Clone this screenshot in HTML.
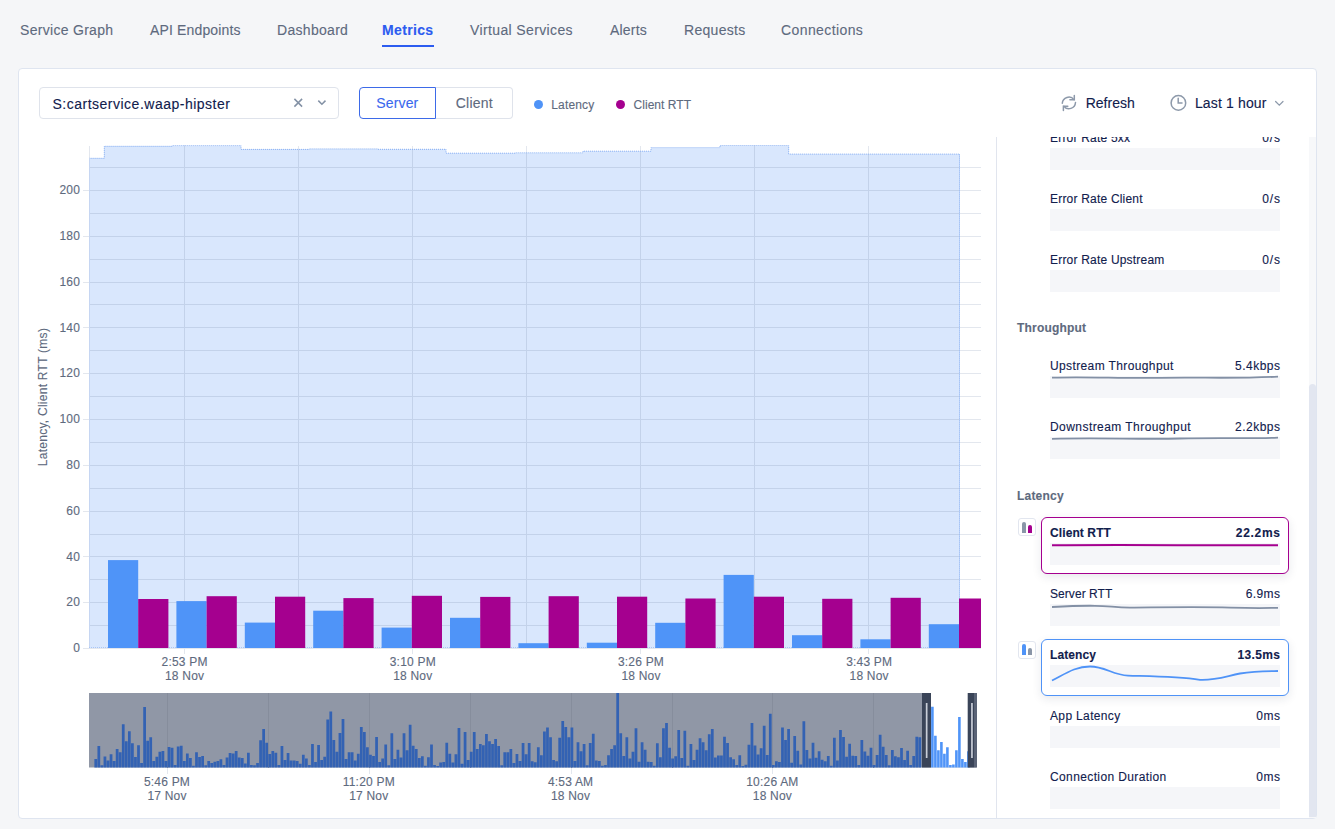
<!DOCTYPE html><html><head><meta charset="utf-8"><style>
html,body{margin:0;padding:0;width:1335px;height:829px;overflow:hidden;background:#f5f6f8;font-family:"Liberation Sans",sans-serif}
.t{position:absolute;white-space:nowrap;-webkit-text-stroke:0.12px currentColor}
</style></head><body>
<div class="t" style="left:20px;top:23.05px;font-size:14px;line-height:14px;color:#5e6a7e;font-weight:400;letter-spacing:0.3px;">Service Graph</div>
<div class="t" style="left:150px;top:23.05px;font-size:14px;line-height:14px;color:#5e6a7e;font-weight:400;letter-spacing:0.15px;">API Endpoints</div>
<div class="t" style="left:277px;top:23.05px;font-size:14px;line-height:14px;color:#5e6a7e;font-weight:400;letter-spacing:0.3px;">Dashboard</div>
<div class="t" style="left:470px;top:23.05px;font-size:14px;line-height:14px;color:#5e6a7e;font-weight:400;letter-spacing:0.37px;">Virtual Services</div>
<div class="t" style="left:610px;top:23.05px;font-size:14px;line-height:14px;color:#5e6a7e;font-weight:400;letter-spacing:0.2px;">Alerts</div>
<div class="t" style="left:684px;top:23.05px;font-size:14px;line-height:14px;color:#5e6a7e;font-weight:400;letter-spacing:0.3px;">Requests</div>
<div class="t" style="left:781px;top:23.05px;font-size:14px;line-height:14px;color:#5e6a7e;font-weight:400;letter-spacing:0.4px;">Connections</div>
<div class="t" style="left:382px;top:23.05px;font-size:14px;line-height:14px;color:#2c5cf0;font-weight:700;letter-spacing:0.35px;">Metrics</div>
<div style="position:absolute;left:382px;top:45px;width:52px;height:2px;background:#2c5cf0"></div>
<div style="position:absolute;left:18px;top:68px;width:1297px;height:749px;background:#fff;border:1px solid #dfe5f0;border-radius:4px"></div>
<div style="position:absolute;left:39px;top:87px;width:298px;height:30px;border:1px solid #dfe3eb;border-radius:4px;background:#fff"></div>
<div class="t" style="left:52.5px;top:97.45px;font-size:14px;line-height:14px;color:#11204d;font-weight:400;letter-spacing:0.5px;">S:cartservice.waap-hipster</div>
<svg style="position:absolute;left:0;top:0" width="1335" height="140"><path d="M294.4 98.9l7.7 7.7M302.1 98.9l-7.7 7.7" stroke="#8391a5" stroke-width="1.5" fill="none"/><path d="M318.3 100.6l3.6 3.6 3.6-3.6" stroke="#8391a5" stroke-width="1.5" fill="none"/></svg>
<div style="position:absolute;left:436px;top:87px;width:76px;height:30px;border:1px solid #dfe3eb;border-left:none;border-radius:0 4px 4px 0;background:#fff"></div>
<div style="position:absolute;left:359px;top:87px;width:75px;height:30px;border:1px solid #3d6ae8;border-radius:4px 0 0 4px;background:#fff"></div>
<div class="t" style="left:376.3px;top:95.95px;font-size:14px;line-height:14px;color:#3a68ee;font-weight:400;letter-spacing:0.15px;">Server</div>
<div class="t" style="left:455.8px;top:95.95px;font-size:14px;line-height:14px;color:#5e6a7e;font-weight:400;letter-spacing:0.2px;">Client</div>
<div style="position:absolute;left:533.7px;top:99.9px;width:9px;height:9px;border-radius:50%;background:#4f93f7"></div>
<div style="position:absolute;left:615.7px;top:99.9px;width:9px;height:9px;border-radius:50%;background:#a5008f"></div>
<div class="t" style="left:551.3px;top:98.74px;font-size:12px;line-height:12px;color:#5e6a7e;font-weight:400;letter-spacing:0.15px;">Latency</div>
<div class="t" style="left:633.5px;top:98.74px;font-size:12px;line-height:12px;color:#5e6a7e;font-weight:400;letter-spacing:0.05px;">Client RTT</div>
<div class="t" style="left:1085.7px;top:95.95px;font-size:14px;line-height:14px;color:#11204d;font-weight:400;">Refresh</div>
<div class="t" style="left:1194.9px;top:96.05px;font-size:14px;line-height:14px;color:#11204d;font-weight:400;letter-spacing:0.15px;">Last 1 hour</div>
<svg style="position:absolute;left:0;top:0" width="1335" height="140">
<g stroke="#8d99aa" stroke-width="1.5" fill="none" stroke-linecap="round">
<path d="M1074.3 95.4v4.3h-4.4"/><path d="M1062.3 103.3A6.6 6.6 0 0 1 1074 99.6"/>
<path d="M1063.4 110.5v-4.3h4.4"/><path d="M1075.5 102.5A6.6 6.6 0 0 1 1063.8 106.3"/>
<circle cx="1178.4" cy="102.9" r="7.3"/><path d="M1178.2 98.3v4.8h3.8"/>
<path d="M1275.6 101.5l3.7 3.7 3.7-3.7" stroke-width="1.2"/>
</g></svg>
<div style="position:absolute;left:996px;top:137px;width:1px;height:681px;background:#e1e5ee"></div>
<svg style="position:absolute;left:0;top:0" width="1335" height="829" shape-rendering="crispEdges">
<line x1="83" y1="648.5" x2="981" y2="648.5" stroke="#e3e7ee" stroke-width="1"/>
<line x1="89.4" y1="625.5" x2="981" y2="625.5" stroke="#e3e7ee" stroke-width="1"/>
<line x1="83" y1="602.5" x2="981" y2="602.5" stroke="#e3e7ee" stroke-width="1"/>
<line x1="89.4" y1="579.5" x2="981" y2="579.5" stroke="#e3e7ee" stroke-width="1"/>
<line x1="83" y1="556.5" x2="981" y2="556.5" stroke="#e3e7ee" stroke-width="1"/>
<line x1="89.4" y1="534.5" x2="981" y2="534.5" stroke="#e3e7ee" stroke-width="1"/>
<line x1="83" y1="511.5" x2="981" y2="511.5" stroke="#e3e7ee" stroke-width="1"/>
<line x1="89.4" y1="488.5" x2="981" y2="488.5" stroke="#e3e7ee" stroke-width="1"/>
<line x1="83" y1="465.5" x2="981" y2="465.5" stroke="#e3e7ee" stroke-width="1"/>
<line x1="89.4" y1="442.5" x2="981" y2="442.5" stroke="#e3e7ee" stroke-width="1"/>
<line x1="83" y1="419.5" x2="981" y2="419.5" stroke="#e3e7ee" stroke-width="1"/>
<line x1="89.4" y1="396.5" x2="981" y2="396.5" stroke="#e3e7ee" stroke-width="1"/>
<line x1="83" y1="373.5" x2="981" y2="373.5" stroke="#e3e7ee" stroke-width="1"/>
<line x1="89.4" y1="350.5" x2="981" y2="350.5" stroke="#e3e7ee" stroke-width="1"/>
<line x1="83" y1="327.5" x2="981" y2="327.5" stroke="#e3e7ee" stroke-width="1"/>
<line x1="89.4" y1="304.5" x2="981" y2="304.5" stroke="#e3e7ee" stroke-width="1"/>
<line x1="83" y1="282.5" x2="981" y2="282.5" stroke="#e3e7ee" stroke-width="1"/>
<line x1="89.4" y1="259.5" x2="981" y2="259.5" stroke="#e3e7ee" stroke-width="1"/>
<line x1="83" y1="236.5" x2="981" y2="236.5" stroke="#e3e7ee" stroke-width="1"/>
<line x1="89.4" y1="213.5" x2="981" y2="213.5" stroke="#e3e7ee" stroke-width="1"/>
<line x1="83" y1="190.5" x2="981" y2="190.5" stroke="#e3e7ee" stroke-width="1"/>
<line x1="89.4" y1="167.5" x2="981" y2="167.5" stroke="#e3e7ee" stroke-width="1"/>
<line x1="89.5" y1="145.5" x2="89.5" y2="648" stroke="#e3e7ee" stroke-width="1"/>
<line x1="184.5" y1="145.5" x2="184.5" y2="654" stroke="#e3e7ee" stroke-width="1"/>
<line x1="298.5" y1="145.5" x2="298.5" y2="648" stroke="#e3e7ee" stroke-width="1"/>
<line x1="412.5" y1="145.5" x2="412.5" y2="654" stroke="#e3e7ee" stroke-width="1"/>
<line x1="526.5" y1="145.5" x2="526.5" y2="648" stroke="#e3e7ee" stroke-width="1"/>
<line x1="640.5" y1="145.5" x2="640.5" y2="654" stroke="#e3e7ee" stroke-width="1"/>
<line x1="754.5" y1="145.5" x2="754.5" y2="648" stroke="#e3e7ee" stroke-width="1"/>
<line x1="868.5" y1="145.5" x2="868.5" y2="654" stroke="#e3e7ee" stroke-width="1"/>
<path d="M89.4 648.0 L89.4 158.3 L104.3 158.3 L104.3 146.3 L172 146.3 L172 145.6 L241 145.6 L241 149.4 L309 149.4 L309 148.9 L378 148.9 L378 149.3 L446 149.3 L446 153.2 L515 153.2 L515 152.8 L583 152.8 L583 151.2 L651 151.2 L651 147.6 L720 147.6 L720 145.5 L788.7 145.5 L788.7 154.1 L959.5 154.1 L959.5 648.0 Z" fill="#d9e7fd" stroke="none"/>
<clipPath id="ca"><path d="M89.4 648.0 L89.4 158.3 L104.3 158.3 L104.3 146.3 L172 146.3 L172 145.6 L241 145.6 L241 149.4 L309 149.4 L309 148.9 L378 148.9 L378 149.3 L446 149.3 L446 153.2 L515 153.2 L515 152.8 L583 152.8 L583 151.2 L651 151.2 L651 147.6 L720 147.6 L720 145.5 L788.7 145.5 L788.7 154.1 L959.5 154.1 L959.5 648.0 Z"/></clipPath>
<g clip-path="url(#ca)">
<line x1="89.4" y1="625.5" x2="981" y2="625.5" stroke="#c3d2ea" stroke-width="1"/>
<line x1="89.4" y1="602.5" x2="981" y2="602.5" stroke="#c3d2ea" stroke-width="1"/>
<line x1="89.4" y1="579.5" x2="981" y2="579.5" stroke="#c3d2ea" stroke-width="1"/>
<line x1="89.4" y1="556.5" x2="981" y2="556.5" stroke="#c3d2ea" stroke-width="1"/>
<line x1="89.4" y1="534.5" x2="981" y2="534.5" stroke="#c3d2ea" stroke-width="1"/>
<line x1="89.4" y1="511.5" x2="981" y2="511.5" stroke="#c3d2ea" stroke-width="1"/>
<line x1="89.4" y1="488.5" x2="981" y2="488.5" stroke="#c3d2ea" stroke-width="1"/>
<line x1="89.4" y1="465.5" x2="981" y2="465.5" stroke="#c3d2ea" stroke-width="1"/>
<line x1="89.4" y1="442.5" x2="981" y2="442.5" stroke="#c3d2ea" stroke-width="1"/>
<line x1="89.4" y1="419.5" x2="981" y2="419.5" stroke="#c3d2ea" stroke-width="1"/>
<line x1="89.4" y1="396.5" x2="981" y2="396.5" stroke="#c3d2ea" stroke-width="1"/>
<line x1="89.4" y1="373.5" x2="981" y2="373.5" stroke="#c3d2ea" stroke-width="1"/>
<line x1="89.4" y1="350.5" x2="981" y2="350.5" stroke="#c3d2ea" stroke-width="1"/>
<line x1="89.4" y1="327.5" x2="981" y2="327.5" stroke="#c3d2ea" stroke-width="1"/>
<line x1="89.4" y1="304.5" x2="981" y2="304.5" stroke="#c3d2ea" stroke-width="1"/>
<line x1="89.4" y1="282.5" x2="981" y2="282.5" stroke="#c3d2ea" stroke-width="1"/>
<line x1="89.4" y1="259.5" x2="981" y2="259.5" stroke="#c3d2ea" stroke-width="1"/>
<line x1="89.4" y1="236.5" x2="981" y2="236.5" stroke="#c3d2ea" stroke-width="1"/>
<line x1="89.4" y1="213.5" x2="981" y2="213.5" stroke="#c3d2ea" stroke-width="1"/>
<line x1="89.4" y1="190.5" x2="981" y2="190.5" stroke="#c3d2ea" stroke-width="1"/>
<line x1="89.4" y1="167.5" x2="981" y2="167.5" stroke="#c3d2ea" stroke-width="1"/>
<line x1="184.5" y1="140" x2="184.5" y2="648" stroke="#c3d2ea" stroke-width="1"/>
<line x1="298.5" y1="140" x2="298.5" y2="648" stroke="#c3d2ea" stroke-width="1"/>
<line x1="412.5" y1="140" x2="412.5" y2="648" stroke="#c3d2ea" stroke-width="1"/>
<line x1="526.5" y1="140" x2="526.5" y2="648" stroke="#c3d2ea" stroke-width="1"/>
<line x1="640.5" y1="140" x2="640.5" y2="648" stroke="#c3d2ea" stroke-width="1"/>
<line x1="754.5" y1="140" x2="754.5" y2="648" stroke="#c3d2ea" stroke-width="1"/>
<line x1="868.5" y1="140" x2="868.5" y2="648" stroke="#c3d2ea" stroke-width="1"/>
</g>
<path d="M89.4 158.3 L104.3 158.3 L104.3 146.3 L172 146.3 L172 145.6 L241 145.6 L241 149.4 L309 149.4 L309 148.9 L378 148.9 L378 149.3 L446 149.3 L446 153.2 L515 153.2 L515 152.8 L583 152.8 L583 151.2 L651 151.2 L651 147.6 L720 147.6 L720 145.5 L788.7 145.5 L788.7 154.1 L959.5 154.1 L959.5 648.0" fill="none" stroke="#86aef2" stroke-width="1" stroke-dasharray="1 1" shape-rendering="auto"/>
<line x1="83" y1="648.5" x2="981" y2="648.5" stroke="#e3e7ee" stroke-width="1"/>
<line x1="89.5" y1="158" x2="89.5" y2="648" stroke="#c6d6f2" stroke-width="1"/>
<line x1="89" y1="647.5" x2="959.5" y2="647.5" stroke="#a8c5f6" stroke-width="1" stroke-dasharray="1 1"/>
<rect x="108.0" y="560.1" width="30.2" height="87.9" fill="#4f94f8" shape-rendering="auto"/>
<rect x="138.2" y="599.0" width="30.2" height="49.0" fill="#a5008f" shape-rendering="auto"/>
<rect x="176.4" y="601.1" width="30.2" height="46.9" fill="#4f94f8" shape-rendering="auto"/>
<rect x="206.6" y="596.2" width="30.2" height="51.8" fill="#a5008f" shape-rendering="auto"/>
<rect x="244.8" y="622.6" width="30.2" height="25.4" fill="#4f94f8" shape-rendering="auto"/>
<rect x="275.0" y="596.7" width="30.2" height="51.3" fill="#a5008f" shape-rendering="auto"/>
<rect x="313.2" y="610.7" width="30.2" height="37.3" fill="#4f94f8" shape-rendering="auto"/>
<rect x="343.4" y="598.1" width="30.2" height="49.9" fill="#a5008f" shape-rendering="auto"/>
<rect x="381.6" y="627.6" width="30.2" height="20.4" fill="#4f94f8" shape-rendering="auto"/>
<rect x="411.8" y="595.8" width="30.2" height="52.2" fill="#a5008f" shape-rendering="auto"/>
<rect x="450.0" y="617.8" width="30.2" height="30.2" fill="#4f94f8" shape-rendering="auto"/>
<rect x="480.2" y="596.9" width="30.2" height="51.1" fill="#a5008f" shape-rendering="auto"/>
<rect x="518.4" y="643.2" width="30.2" height="4.8" fill="#4f94f8" shape-rendering="auto"/>
<rect x="548.6" y="596.2" width="30.2" height="51.8" fill="#a5008f" shape-rendering="auto"/>
<rect x="586.8" y="642.7" width="30.2" height="5.3" fill="#4f94f8" shape-rendering="auto"/>
<rect x="617.0" y="596.7" width="30.2" height="51.3" fill="#a5008f" shape-rendering="auto"/>
<rect x="655.2" y="622.8" width="30.2" height="25.2" fill="#4f94f8" shape-rendering="auto"/>
<rect x="685.4" y="598.5" width="30.2" height="49.5" fill="#a5008f" shape-rendering="auto"/>
<rect x="723.6" y="574.9" width="30.2" height="73.1" fill="#4f94f8" shape-rendering="auto"/>
<rect x="753.8" y="596.7" width="30.2" height="51.3" fill="#a5008f" shape-rendering="auto"/>
<rect x="792.0" y="635.2" width="30.2" height="12.8" fill="#4f94f8" shape-rendering="auto"/>
<rect x="822.2" y="598.8" width="30.2" height="49.2" fill="#a5008f" shape-rendering="auto"/>
<rect x="860.4" y="639.3" width="30.2" height="8.7" fill="#4f94f8" shape-rendering="auto"/>
<rect x="890.6" y="597.8" width="30.2" height="50.2" fill="#a5008f" shape-rendering="auto"/>
<rect x="928.8" y="624.2" width="30.2" height="23.8" fill="#4f94f8" shape-rendering="auto"/>
<rect x="959.0" y="598.5" width="22.0" height="49.5" fill="#a5008f" shape-rendering="auto"/>
</svg>
<div class="t" style="right:1254.9px;top:642.14px;font-size:12px;line-height:12px;color:#5e6a7e;font-weight:400;letter-spacing:0.2px;">0</div>
<div class="t" style="right:1254.9px;top:596.34px;font-size:12px;line-height:12px;color:#5e6a7e;font-weight:400;letter-spacing:0.2px;">20</div>
<div class="t" style="right:1254.9px;top:550.54px;font-size:12px;line-height:12px;color:#5e6a7e;font-weight:400;letter-spacing:0.2px;">40</div>
<div class="t" style="right:1254.9px;top:504.74px;font-size:12px;line-height:12px;color:#5e6a7e;font-weight:400;letter-spacing:0.2px;">60</div>
<div class="t" style="right:1254.9px;top:458.94px;font-size:12px;line-height:12px;color:#5e6a7e;font-weight:400;letter-spacing:0.2px;">80</div>
<div class="t" style="right:1254.9px;top:413.14px;font-size:12px;line-height:12px;color:#5e6a7e;font-weight:400;letter-spacing:0.2px;">100</div>
<div class="t" style="right:1254.9px;top:367.34px;font-size:12px;line-height:12px;color:#5e6a7e;font-weight:400;letter-spacing:0.2px;">120</div>
<div class="t" style="right:1254.9px;top:321.54px;font-size:12px;line-height:12px;color:#5e6a7e;font-weight:400;letter-spacing:0.2px;">140</div>
<div class="t" style="right:1254.9px;top:275.74px;font-size:12px;line-height:12px;color:#5e6a7e;font-weight:400;letter-spacing:0.2px;">160</div>
<div class="t" style="right:1254.9px;top:229.94px;font-size:12px;line-height:12px;color:#5e6a7e;font-weight:400;letter-spacing:0.2px;">180</div>
<div class="t" style="right:1254.9px;top:184.14px;font-size:12px;line-height:12px;color:#5e6a7e;font-weight:400;letter-spacing:0.2px;">200</div>
<div class="t" style="left:-32.5px;top:390.7px;width:150px;text-align:center;font-size:12px;line-height:12px;color:#5e6a7e;transform:rotate(-90deg);letter-spacing:0.26px">Latency, Client RTT (ms)</div>
<div class="t" style="left:-15.400000000000006px;width:400px;text-align:center;top:655.84px;font-size:12px;line-height:12px;color:#5e6a7e;font-weight:400;letter-spacing:0.2px;">2:53 PM</div>
<div class="t" style="left:-15.400000000000006px;width:400px;text-align:center;top:669.84px;font-size:12px;line-height:12px;color:#5e6a7e;font-weight:400;letter-spacing:0.2px;">18 Nov</div>
<div class="t" style="left:212.79999999999995px;width:400px;text-align:center;top:655.84px;font-size:12px;line-height:12px;color:#5e6a7e;font-weight:400;letter-spacing:0.2px;">3:10 PM</div>
<div class="t" style="left:212.79999999999995px;width:400px;text-align:center;top:669.84px;font-size:12px;line-height:12px;color:#5e6a7e;font-weight:400;letter-spacing:0.2px;">18 Nov</div>
<div class="t" style="left:441.0px;width:400px;text-align:center;top:655.84px;font-size:12px;line-height:12px;color:#5e6a7e;font-weight:400;letter-spacing:0.2px;">3:26 PM</div>
<div class="t" style="left:441.0px;width:400px;text-align:center;top:669.84px;font-size:12px;line-height:12px;color:#5e6a7e;font-weight:400;letter-spacing:0.2px;">18 Nov</div>
<div class="t" style="left:669.1999999999999px;width:400px;text-align:center;top:655.84px;font-size:12px;line-height:12px;color:#5e6a7e;font-weight:400;letter-spacing:0.2px;">3:43 PM</div>
<div class="t" style="left:669.1999999999999px;width:400px;text-align:center;top:669.84px;font-size:12px;line-height:12px;color:#5e6a7e;font-weight:400;letter-spacing:0.2px;">18 Nov</div>
<svg style="position:absolute;left:0;top:0" width="1335" height="829">
<rect x="89" y="693.0" width="887.5" height="74.5" fill="#9097a6"/>
<rect x="931" y="693.0" width="37" height="74.5" fill="#ffffff"/>
<line x1="167.5" y1="693.0" x2="167.5" y2="773.5" stroke="#868d9c" stroke-width="1" shape-rendering="crispEdges"/>
<line x1="268.5" y1="693.0" x2="268.5" y2="767.5" stroke="#868d9c" stroke-width="1" shape-rendering="crispEdges"/>
<line x1="369.5" y1="693.0" x2="369.5" y2="773.5" stroke="#868d9c" stroke-width="1" shape-rendering="crispEdges"/>
<line x1="470.5" y1="693.0" x2="470.5" y2="767.5" stroke="#868d9c" stroke-width="1" shape-rendering="crispEdges"/>
<line x1="571.5" y1="693.0" x2="571.5" y2="773.5" stroke="#868d9c" stroke-width="1" shape-rendering="crispEdges"/>
<line x1="672.5" y1="693.0" x2="672.5" y2="767.5" stroke="#868d9c" stroke-width="1" shape-rendering="crispEdges"/>
<line x1="772.5" y1="693.0" x2="772.5" y2="773.5" stroke="#868d9c" stroke-width="1" shape-rendering="crispEdges"/>
<line x1="873.5" y1="693.0" x2="873.5" y2="767.5" stroke="#868d9c" stroke-width="1" shape-rendering="crispEdges"/>
<line x1="167.5" y1="767.5" x2="167.5" y2="773.5" stroke="#e3e7ee" stroke-width="1" shape-rendering="crispEdges"/>
<line x1="369.5" y1="767.5" x2="369.5" y2="773.5" stroke="#e3e7ee" stroke-width="1" shape-rendering="crispEdges"/>
<line x1="571.5" y1="767.5" x2="571.5" y2="773.5" stroke="#e3e7ee" stroke-width="1" shape-rendering="crispEdges"/>
<line x1="772.5" y1="767.5" x2="772.5" y2="773.5" stroke="#e3e7ee" stroke-width="1" shape-rendering="crispEdges"/>
<path d="M94.40 758.93h2.75V767.5h-2.75zM97.45 746.08h2.75V767.5h-2.75zM100.50 765.36h2.75V767.5h-2.75zM103.56 756.46h2.75V767.5h-2.75zM106.61 760.41h2.75V767.5h-2.75zM109.66 754.32h2.75V767.5h-2.75zM112.71 760.91h2.75V767.5h-2.75zM115.76 748.88h2.75V767.5h-2.75zM118.82 752.17h2.75V767.5h-2.75zM121.87 724.16h2.75V767.5h-2.75zM124.92 741.13h2.75V767.5h-2.75zM127.97 731.24h2.75V767.5h-2.75zM131.02 743.27h2.75V767.5h-2.75zM134.08 757.12h2.75V767.5h-2.75zM137.13 745.25h2.75V767.5h-2.75zM140.18 762.89h2.75V767.5h-2.75zM143.23 707.02h2.75V767.5h-2.75zM146.28 740.64h2.75V767.5h-2.75zM149.34 737.34h2.75V767.5h-2.75zM152.39 760.91h2.75V767.5h-2.75zM155.44 756.79h2.75V767.5h-2.75zM158.49 751.84h2.75V767.5h-2.75zM161.54 751.02h2.75V767.5h-2.75zM164.60 760.91h2.75V767.5h-2.75zM167.65 746.90h2.75V767.5h-2.75zM170.70 747.72h2.75V767.5h-2.75zM173.75 765.03h2.75V767.5h-2.75zM176.80 746.41h2.75V767.5h-2.75zM179.86 745.75h2.75V767.5h-2.75zM182.91 760.91h2.75V767.5h-2.75zM185.96 753.49h2.75V767.5h-2.75zM189.01 758.11h2.75V767.5h-2.75zM192.06 765.85h2.75V767.5h-2.75zM195.12 752.34h2.75V767.5h-2.75zM198.17 757.12h2.75V767.5h-2.75zM201.22 755.96h2.75V767.5h-2.75zM204.27 765.36h2.75V767.5h-2.75zM207.33 760.91h2.75V767.5h-2.75zM210.38 763.05h2.75V767.5h-2.75zM213.43 761.73h2.75V767.5h-2.75zM216.48 760.91h2.75V767.5h-2.75zM219.53 759.26h2.75V767.5h-2.75zM222.59 765.03h2.75V767.5h-2.75zM225.64 757.61h2.75V767.5h-2.75zM228.69 753.00h2.75V767.5h-2.75zM231.74 753.49h2.75V767.5h-2.75zM234.79 751.02h2.75V767.5h-2.75zM237.85 757.61h2.75V767.5h-2.75zM240.90 758.11h2.75V767.5h-2.75zM243.95 763.38h2.75V767.5h-2.75zM247.00 752.67h2.75V767.5h-2.75zM250.05 765.03h2.75V767.5h-2.75zM253.11 765.36h2.75V767.5h-2.75zM256.16 763.05h2.75V767.5h-2.75zM259.21 740.31h2.75V767.5h-2.75zM262.26 729.10h2.75V767.5h-2.75zM265.31 742.78h2.75V767.5h-2.75zM268.37 753.99h2.75V767.5h-2.75zM271.42 751.02h2.75V767.5h-2.75zM274.47 752.67h2.75V767.5h-2.75zM277.52 765.03h2.75V767.5h-2.75zM280.57 746.08h2.75V767.5h-2.75zM283.63 760.08h2.75V767.5h-2.75zM286.68 753.00h2.75V767.5h-2.75zM289.73 760.58h2.75V767.5h-2.75zM292.78 760.58h2.75V767.5h-2.75zM295.83 760.91h2.75V767.5h-2.75zM298.89 763.87h2.75V767.5h-2.75zM301.94 754.81h2.75V767.5h-2.75zM304.99 758.44h2.75V767.5h-2.75zM308.04 765.03h2.75V767.5h-2.75zM311.09 744.10h2.75V767.5h-2.75zM314.15 762.06h2.75V767.5h-2.75zM317.20 744.92h2.75V767.5h-2.75zM320.25 760.08h2.75V767.5h-2.75zM323.30 756.79h2.75V767.5h-2.75zM326.35 719.38h2.75V767.5h-2.75zM329.41 711.47h2.75V767.5h-2.75zM332.46 739.98h2.75V767.5h-2.75zM335.51 751.84h2.75V767.5h-2.75zM338.56 732.89h2.75V767.5h-2.75zM341.61 718.88h2.75V767.5h-2.75zM344.67 758.93h2.75V767.5h-2.75zM347.72 752.34h2.75V767.5h-2.75zM350.77 752.34h2.75V767.5h-2.75zM353.82 760.58h2.75V767.5h-2.75zM356.87 753.82h2.75V767.5h-2.75zM359.93 727.12h2.75V767.5h-2.75zM362.98 732.07h2.75V767.5h-2.75zM366.03 747.23h2.75V767.5h-2.75zM369.08 754.81h2.75V767.5h-2.75zM372.13 755.96h2.75V767.5h-2.75zM375.19 737.01h2.75V767.5h-2.75zM378.24 762.06h2.75V767.5h-2.75zM381.29 758.44h2.75V767.5h-2.75zM384.34 744.43h2.75V767.5h-2.75zM387.39 765.36h2.75V767.5h-2.75zM390.45 733.22h2.75V767.5h-2.75zM393.50 758.93h2.75V767.5h-2.75zM396.55 749.87h2.75V767.5h-2.75zM399.60 757.61h2.75V767.5h-2.75zM402.65 733.22h2.75V767.5h-2.75zM405.71 750.20h2.75V767.5h-2.75zM408.76 724.65h2.75V767.5h-2.75zM411.81 745.75h2.75V767.5h-2.75zM414.86 749.04h2.75V767.5h-2.75zM417.92 757.94h2.75V767.5h-2.75zM420.97 756.29h2.75V767.5h-2.75zM424.02 765.85h2.75V767.5h-2.75zM427.07 757.28h2.75V767.5h-2.75zM430.12 744.43h2.75V767.5h-2.75zM433.18 765.03h2.75V767.5h-2.75zM436.23 766.00h2.75V767.5h-2.75zM439.28 762.56h2.75V767.5h-2.75zM442.33 762.06h2.75V767.5h-2.75zM445.38 742.78h2.75V767.5h-2.75zM448.44 753.82h2.75V767.5h-2.75zM451.49 762.56h2.75V767.5h-2.75zM454.54 754.32h2.75V767.5h-2.75zM457.59 727.95h2.75V767.5h-2.75zM460.64 763.71h2.75V767.5h-2.75zM463.70 732.07h2.75V767.5h-2.75zM466.75 760.08h2.75V767.5h-2.75zM469.80 751.84h2.75V767.5h-2.75zM472.85 732.07h2.75V767.5h-2.75zM475.90 748.88h2.75V767.5h-2.75zM478.96 744.10h2.75V767.5h-2.75zM482.01 745.25h2.75V767.5h-2.75zM485.06 734.05h2.75V767.5h-2.75zM488.11 741.13h2.75V767.5h-2.75zM491.16 744.10h2.75V767.5h-2.75zM494.22 738.99h2.75V767.5h-2.75zM497.27 746.08h2.75V767.5h-2.75zM500.32 765.36h2.75V767.5h-2.75zM503.37 752.17h2.75V767.5h-2.75zM506.42 752.17h2.75V767.5h-2.75zM509.48 749.04h2.75V767.5h-2.75zM512.53 762.89h2.75V767.5h-2.75zM515.58 753.99h2.75V767.5h-2.75zM518.63 760.91h2.75V767.5h-2.75zM521.68 743.11h2.75V767.5h-2.75zM524.74 754.32h2.75V767.5h-2.75zM527.79 743.11h2.75V767.5h-2.75zM530.84 761.24h2.75V767.5h-2.75zM533.89 762.23h2.75V767.5h-2.75zM536.94 747.23h2.75V767.5h-2.75zM540.00 755.14h2.75V767.5h-2.75zM543.05 731.57h2.75V767.5h-2.75zM546.10 727.45h2.75V767.5h-2.75zM549.15 737.34h2.75V767.5h-2.75zM552.20 760.08h2.75V767.5h-2.75zM555.26 761.24h2.75V767.5h-2.75zM558.31 737.84h2.75V767.5h-2.75zM561.36 721.03h2.75V767.5h-2.75zM564.41 727.12h2.75V767.5h-2.75zM567.46 737.34h2.75V767.5h-2.75zM570.52 727.62h2.75V767.5h-2.75zM573.57 760.91h2.75V767.5h-2.75zM576.62 742.29h2.75V767.5h-2.75zM579.67 751.35h2.75V767.5h-2.75zM582.72 744.10h2.75V767.5h-2.75zM585.78 765.36h2.75V767.5h-2.75zM588.83 743.11h2.75V767.5h-2.75zM591.88 733.72h2.75V767.5h-2.75zM594.93 760.41h2.75V767.5h-2.75zM597.98 760.91h2.75V767.5h-2.75zM601.04 765.85h2.75V767.5h-2.75zM604.09 765.03h2.75V767.5h-2.75zM607.14 755.14h2.75V767.5h-2.75zM610.19 749.04h2.75V767.5h-2.75zM613.25 745.25h2.75V767.5h-2.75zM616.30 693.01h2.75V767.5h-2.75zM619.35 733.22h2.75V767.5h-2.75zM622.40 755.96h2.75V767.5h-2.75zM625.45 737.34h2.75V767.5h-2.75zM628.51 758.44h2.75V767.5h-2.75zM631.56 751.84h2.75V767.5h-2.75zM634.61 728.28h2.75V767.5h-2.75zM637.66 761.73h2.75V767.5h-2.75zM640.71 742.29h2.75V767.5h-2.75zM643.77 749.70h2.75V767.5h-2.75zM646.82 761.73h2.75V767.5h-2.75zM649.87 762.06h2.75V767.5h-2.75zM652.92 765.85h2.75V767.5h-2.75zM655.97 743.27h2.75V767.5h-2.75zM659.03 757.28h2.75V767.5h-2.75zM662.08 728.28h2.75V767.5h-2.75zM665.13 723.00h2.75V767.5h-2.75zM668.18 747.72h2.75V767.5h-2.75zM671.23 758.44h2.75V767.5h-2.75zM674.29 756.29h2.75V767.5h-2.75zM677.34 730.09h2.75V767.5h-2.75zM680.39 757.94h2.75V767.5h-2.75zM683.44 730.75h2.75V767.5h-2.75zM686.49 765.85h2.75V767.5h-2.75zM689.55 744.10h2.75V767.5h-2.75zM692.60 760.08h2.75V767.5h-2.75zM695.65 749.87h2.75V767.5h-2.75zM698.70 738.17h2.75V767.5h-2.75zM701.75 742.29h2.75V767.5h-2.75zM704.81 750.20h2.75V767.5h-2.75zM707.86 734.21h2.75V767.5h-2.75zM710.91 729.10h2.75V767.5h-2.75zM713.96 757.61h2.75V767.5h-2.75zM717.01 755.47h2.75V767.5h-2.75zM720.07 755.47h2.75V767.5h-2.75zM723.12 736.68h2.75V767.5h-2.75zM726.17 743.11h2.75V767.5h-2.75zM729.22 757.28h2.75V767.5h-2.75zM732.27 759.26h2.75V767.5h-2.75zM735.33 765.03h2.75V767.5h-2.75zM738.38 755.14h2.75V767.5h-2.75zM741.43 766.00h2.75V767.5h-2.75zM744.48 764.70h2.75V767.5h-2.75zM747.53 744.76h2.75V767.5h-2.75zM750.59 723.05h2.75V767.5h-2.75zM753.64 745.62h2.75V767.5h-2.75zM756.69 754.58h2.75V767.5h-2.75zM759.74 748.20h2.75V767.5h-2.75zM762.79 725.80h2.75V767.5h-2.75zM765.85 754.92h2.75V767.5h-2.75zM768.90 713.74h2.75V767.5h-2.75zM771.95 764.92h2.75V767.5h-2.75zM775.00 761.13h2.75V767.5h-2.75zM778.05 761.99h2.75V767.5h-2.75zM781.11 727.53h2.75V767.5h-2.75zM784.16 739.93h2.75V767.5h-2.75zM787.21 729.08h2.75V767.5h-2.75zM790.26 762.85h2.75V767.5h-2.75zM793.31 735.97h2.75V767.5h-2.75zM796.37 750.79h2.75V767.5h-2.75zM799.42 764.57h2.75V767.5h-2.75zM802.47 721.32h2.75V767.5h-2.75zM805.52 749.93h2.75V767.5h-2.75zM808.57 758.54h2.75V767.5h-2.75zM811.63 742.86h2.75V767.5h-2.75zM814.68 757.68h2.75V767.5h-2.75zM817.73 751.13h2.75V767.5h-2.75zM820.78 759.75h2.75V767.5h-2.75zM823.84 761.13h2.75V767.5h-2.75zM826.89 755.96h2.75V767.5h-2.75zM829.94 765.78h2.75V767.5h-2.75zM832.99 737.87h2.75V767.5h-2.75zM836.04 760.61h2.75V767.5h-2.75zM839.10 729.94h2.75V767.5h-2.75zM842.15 737.00h2.75V767.5h-2.75zM845.20 756.65h2.75V767.5h-2.75zM848.25 743.72h2.75V767.5h-2.75zM851.30 755.78h2.75V767.5h-2.75zM854.36 755.96h2.75V767.5h-2.75zM857.41 764.92h2.75V767.5h-2.75zM860.46 739.93h2.75V767.5h-2.75zM863.51 751.48h2.75V767.5h-2.75zM866.56 755.78h2.75V767.5h-2.75zM869.62 747.69h2.75V767.5h-2.75zM872.67 764.92h2.75V767.5h-2.75zM875.72 754.92h2.75V767.5h-2.75zM878.77 734.76h2.75V767.5h-2.75zM881.82 746.82h2.75V767.5h-2.75zM884.88 755.09h2.75V767.5h-2.75zM887.93 765.26h2.75V767.5h-2.75zM890.98 749.93h2.75V767.5h-2.75zM894.03 756.30h2.75V767.5h-2.75zM897.08 757.16h2.75V767.5h-2.75zM900.14 748.03h2.75V767.5h-2.75zM903.19 760.09h2.75V767.5h-2.75zM906.24 750.79h2.75V767.5h-2.75zM909.29 764.92h2.75V767.5h-2.75zM912.34 755.96h2.75V767.5h-2.75zM915.40 736.83h2.75V767.5h-2.75zM918.45 737.35h2.75V767.5h-2.75z" fill="#3362b3"/>
<path d="M931.10 706.85h2.6V767.5h-2.6zM934.10 735.63h2.6V767.5h-2.6zM937.10 750.27h2.6V767.5h-2.6zM940.10 742.00h2.6V767.5h-2.6zM943.10 753.72h2.6V767.5h-2.6zM946.10 747.17h2.6V767.5h-2.6zM949.10 764.92h2.6V767.5h-2.6zM952.10 764.40h2.6V767.5h-2.6zM955.10 750.27h2.6V767.5h-2.6zM958.10 717.02h2.6V767.5h-2.6zM961.10 758.89h2.6V767.5h-2.6zM964.10 761.99h2.6V767.5h-2.6zM967.10 751.13h2.6V767.5h-2.6z" fill="#4f94f8"/>
<rect x="922" y="693.0" width="9" height="74.5" fill="#3a4458"/>
<rect x="967.7" y="693.0" width="6.3" height="74.5" fill="#3a4458"/>
<rect x="974" y="693.0" width="3" height="74.5" fill="#5a6376"/>
<rect x="925.8" y="703" width="1.7" height="55" fill="#c9ced8"/>
<rect x="971.1" y="703" width="1.7" height="55" fill="#c9ced8"/>
</svg>
<div class="t" style="left:-33.0px;width:400px;text-align:center;top:776.04px;font-size:12px;line-height:12px;color:#5e6a7e;font-weight:400;letter-spacing:0.2px;">5:46 PM</div>
<div class="t" style="left:-33.0px;width:400px;text-align:center;top:790.04px;font-size:12px;line-height:12px;color:#5e6a7e;font-weight:400;letter-spacing:0.2px;">17 Nov</div>
<div class="t" style="left:168.8px;width:400px;text-align:center;top:776.04px;font-size:12px;line-height:12px;color:#5e6a7e;font-weight:400;letter-spacing:0.2px;">11:20 PM</div>
<div class="t" style="left:168.8px;width:400px;text-align:center;top:790.04px;font-size:12px;line-height:12px;color:#5e6a7e;font-weight:400;letter-spacing:0.2px;">17 Nov</div>
<div class="t" style="left:370.6px;width:400px;text-align:center;top:776.04px;font-size:12px;line-height:12px;color:#5e6a7e;font-weight:400;letter-spacing:0.2px;">4:53 AM</div>
<div class="t" style="left:370.6px;width:400px;text-align:center;top:790.04px;font-size:12px;line-height:12px;color:#5e6a7e;font-weight:400;letter-spacing:0.2px;">18 Nov</div>
<div class="t" style="left:572.4000000000001px;width:400px;text-align:center;top:776.04px;font-size:12px;line-height:12px;color:#5e6a7e;font-weight:400;letter-spacing:0.2px;">10:26 AM</div>
<div class="t" style="left:572.4000000000001px;width:400px;text-align:center;top:790.04px;font-size:12px;line-height:12px;color:#5e6a7e;font-weight:400;letter-spacing:0.2px;">18 Nov</div>
<div style="position:absolute;left:997px;top:137px;width:319px;height:681px;overflow:hidden">
<div style="position:absolute;left:44px;top:380px;width:246px;height:55px;border:1px solid #a5008f;border-radius:6px;background:#fff;box-shadow:0 3px 10px rgba(30,40,70,0.10)"></div>
<div style="position:absolute;left:44px;top:501.6px;width:246px;height:55.39999999999998px;border:1px solid #4f93f7;border-radius:6px;background:#fff;box-shadow:0 3px 10px rgba(30,40,70,0.10)"></div>
<div style="position:absolute;left:53px;top:11px;width:230px;height:22px;background:#f5f6f9"></div>
<div class="t" style="left:53px;top:-4.76px;font-size:12px;line-height:12px;color:#11204d;font-weight:400;letter-spacing:0.2px">Error Rate 5xx</div>
<div class="t" style="right:36px;margin-right:-0.9px;top:-4.76px;font-size:12px;line-height:12px;color:#11204d;font-weight:400;letter-spacing:0.9px">0/s</div>
<div style="position:absolute;left:53px;top:72px;width:230px;height:22px;background:#f5f6f9"></div>
<div class="t" style="left:53px;top:56.24px;font-size:12px;line-height:12px;color:#11204d;font-weight:400;letter-spacing:0.2px">Error Rate Client</div>
<div class="t" style="right:36px;margin-right:-0.9px;top:56.24px;font-size:12px;line-height:12px;color:#11204d;font-weight:400;letter-spacing:0.9px">0/s</div>
<div style="position:absolute;left:53px;top:133px;width:230px;height:22px;background:#f5f6f9"></div>
<div class="t" style="left:53px;top:117.24px;font-size:12px;line-height:12px;color:#11204d;font-weight:400;letter-spacing:0.2px">Error Rate Upstream</div>
<div class="t" style="right:36px;margin-right:-0.9px;top:117.24px;font-size:12px;line-height:12px;color:#11204d;font-weight:400;letter-spacing:0.9px">0/s</div>
<div style="position:absolute;left:53px;top:239px;width:230px;height:22px;background:#f5f6f9"></div>
<div class="t" style="left:53px;top:223.24px;font-size:12px;line-height:12px;color:#11204d;font-weight:400;letter-spacing:0.38px">Upstream Throughput</div>
<div class="t" style="right:36px;margin-right:-0.48px;top:223.24px;font-size:12px;line-height:12px;color:#11204d;font-weight:400;letter-spacing:0.48px">5.4kbps</div>
<div style="position:absolute;left:53px;top:300px;width:230px;height:22px;background:#f5f6f9"></div>
<div class="t" style="left:53px;top:284.24px;font-size:12px;line-height:12px;color:#11204d;font-weight:400;letter-spacing:0.44px">Downstream Throughput</div>
<div class="t" style="right:36px;margin-right:-0.48px;top:284.24px;font-size:12px;line-height:12px;color:#11204d;font-weight:400;letter-spacing:0.48px">2.2kbps</div>
<div style="position:absolute;left:53px;top:467px;width:230px;height:22px;background:#f5f6f9"></div>
<div class="t" style="left:53px;top:451.24px;font-size:12px;line-height:12px;color:#11204d;font-weight:400;letter-spacing:0.06px">Server RTT</div>
<div class="t" style="right:36px;margin-right:-0.4px;top:451.24px;font-size:12px;line-height:12px;color:#11204d;font-weight:400;letter-spacing:0.4px">6.9ms</div>
<div style="position:absolute;left:53px;top:589px;width:230px;height:22px;background:#f5f6f9"></div>
<div class="t" style="left:53px;top:573.24px;font-size:12px;line-height:12px;color:#11204d;font-weight:400;letter-spacing:0.35px">App Latency</div>
<div class="t" style="right:36px;margin-right:-0.5px;top:573.24px;font-size:12px;line-height:12px;color:#11204d;font-weight:400;letter-spacing:0.5px">0ms</div>
<div style="position:absolute;left:53px;top:650px;width:230px;height:22px;background:#f5f6f9"></div>
<div class="t" style="left:53px;top:634.24px;font-size:12px;line-height:12px;color:#11204d;font-weight:400;letter-spacing:0.38px">Connection Duration</div>
<div class="t" style="right:36px;margin-right:-0.5px;top:634.24px;font-size:12px;line-height:12px;color:#11204d;font-weight:400;letter-spacing:0.5px">0ms</div>
<div style="position:absolute;left:53px;top:406px;width:230px;height:22px;background:#f5f6f9"></div>
<div class="t" style="left:53px;top:390.34px;font-size:12px;line-height:12px;color:#11204d;font-weight:700;letter-spacing:0.1px">Client RTT</div>
<div class="t" style="right:36px;margin-right:-0.7px;top:390.34px;font-size:12px;line-height:12px;color:#11204d;font-weight:700;letter-spacing:0.7px">22.2ms</div>
<div style="position:absolute;left:53px;top:528px;width:230px;height:22px;background:#f5f6f9"></div>
<div class="t" style="left:53px;top:512.34px;font-size:12px;line-height:12px;color:#11204d;font-weight:700;letter-spacing:0.1px">Latency</div>
<div class="t" style="right:36px;margin-right:-0.35px;top:512.34px;font-size:12px;line-height:12px;color:#11204d;font-weight:700;letter-spacing:0.35px">13.5ms</div>
<div class="t" style="left:20px;top:184.84px;font-size:12px;line-height:12px;color:#5e6a7e;font-weight:700;letter-spacing:0.2px">Throughput</div>
<div class="t" style="left:20px;top:352.84px;font-size:12px;line-height:12px;color:#5e6a7e;font-weight:700;letter-spacing:0.2px">Latency</div>
<div style="position:absolute;left:21px;top:381px;width:16px;height:16px;border:1px solid #e2e6ef;border-radius:3px;background:#fff"></div>
<div style="position:absolute;left:25px;top:384.79999999999995px;width:4px;height:11px;border-radius:2px 2px 0 0;background:#8a96a8"></div>
<div style="position:absolute;left:31px;top:388px;width:4px;height:7.8px;border-radius:2px 2px 0 0;background:#a5008f"></div>
<div style="position:absolute;left:21px;top:503.5px;width:16px;height:16px;border:1px solid #e2e6ef;border-radius:3px;background:#fff"></div>
<div style="position:absolute;left:25px;top:507.29999999999995px;width:4px;height:11px;border-radius:2px 2px 0 0;background:#4f93f7"></div>
<div style="position:absolute;left:31px;top:510.5px;width:4px;height:7.8px;border-radius:2px 2px 0 0;background:#8a96a8"></div>
<svg style="position:absolute;left:0;top:0" width="319" height="681"><g transform="translate(-997 -137)" fill="none" stroke-linecap="butt">
<path d="M1052 377.6 C1090 376.5 1120 378.5 1160 377.8 S1240 378.8 1278 376.6" stroke="#8390a5" stroke-width="1.8"/>
<path d="M1052 438.8 C1100 437.5 1140 439.5 1180 438.5 S1250 438.8 1278 437.6" stroke="#8390a5" stroke-width="1.8"/>
<path d="M1052 545.3 C1100 544.6 1150 544.9 1200 545.2 S1260 545.4 1278 545.2" stroke="#a5008f" stroke-width="2"/>
<path d="M1052 607 C1070 606 1080 605.6 1095 605.8 C1110 606 1115 607.6 1130 607.6 C1170 607.3 1200 606.8 1230 607.6 S1265 608 1278 607.8" stroke="#8390a5" stroke-width="1.8"/>
<path d="M1052 680.5 C1065 674 1075 666.5 1090 666.5 C1105 666.5 1113 675 1128 675.6 C1150 676.3 1178 676.5 1200 679.8 C1215 680.5 1225 676.5 1240 673.5 C1255 671.3 1265 671.3 1278 671" stroke="#4f93f7" stroke-width="1.8"/>
</g></svg>
<div style="position:absolute;left:312px;top:0;width:7px;height:681px;background:#f7f8fa"></div>
<div style="position:absolute;left:312px;top:247px;width:7px;height:433px;background:#e2e6f0;border-radius:4px 4px 0 0"></div>
</div>
</body></html>
